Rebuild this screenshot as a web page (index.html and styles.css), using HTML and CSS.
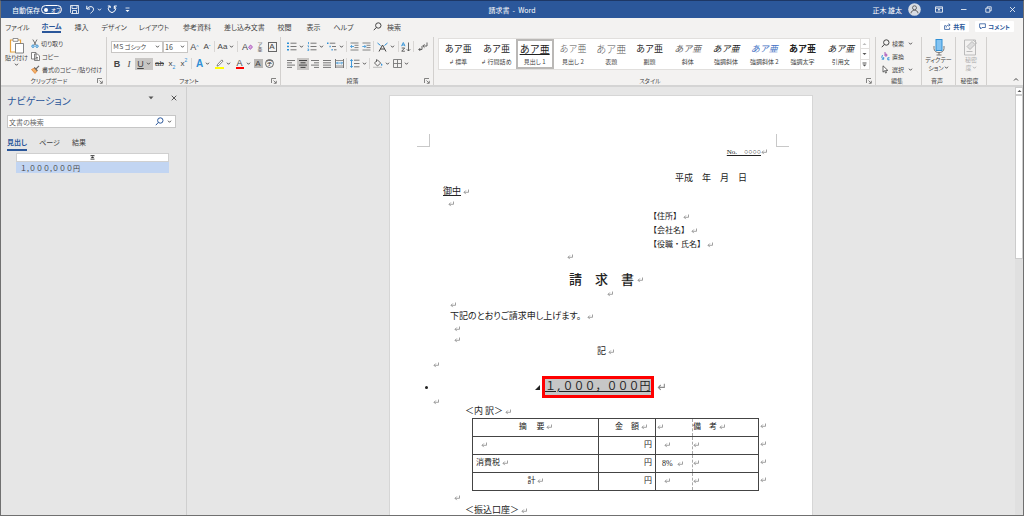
FILE: index.html
```html
<!DOCTYPE html>
<html lang="ja">
<head>
<meta charset="utf-8">
<title>請求書 - Word</title>
<link rel="stylesheet" href="styles.css">
</head>
<body>
<svg class="defs" aria-hidden="true">
  <symbol id="ret" viewBox="0 0 6 6"><path d="M5.500 .5v2.800H1M2.800 1.500L1 3.300l1.800 1.800" fill="none" stroke="#8a8a8a" stroke-width=".8"/></symbol>
  <symbol id="chev" viewBox="0 0 5 5"><path d="M1 1.700l1.500 1.600L4 1.700" fill="none" stroke="currentColor" stroke-width=".9"/></symbol>
  <symbol id="launch" viewBox="0 0 6 6"><path d="M.5 5V.5H5M2.500 2.500L5 5M5.300 2.800v2.500H2.800" fill="none" stroke="#666" stroke-width=".8"/></symbol>
  <symbol id="mag" viewBox="0 0 9 9"><circle cx="5.300" cy="3.500" r="2.700" fill="none" stroke="currentColor"/><path d="M3.400 5.400L.8 8.200" stroke="currentColor"/></symbol>
</svg>

<div class="window">
  <header class="titlebar">
    <div class="quick">
      <label for="autosave">自動保存</label>
      <span class="pill"><input type="checkbox" id="autosave"><span>オフ</span></span>
      <button class="tb save" aria-label="上書き保存"><svg width="9" height="9" viewBox="0 0 9 9" fill="none" stroke="#fff" stroke-width=".8"><path d="M.5.5h8v8h-7l-1-1zM2 .5v3h5v-3M2.500 8.500v-3h4v3"/></svg></button>
      <button class="tb undo" aria-label="元に戻す"><svg width="9" height="9" viewBox="0 0 9 9" fill="none" stroke="#fff"><path d="M.8.8v3.200H4M1 3.800C3 .8 7.500 1 7.500 4.200 7.500 6 6 7 4.500 8.300"/></svg><svg class="c"><use href="#chev"/></svg></button>
      <button class="tb redo" aria-label="やり直し"><svg width="10" height="9" viewBox="0 0 10 9" fill="none" stroke="#fff"><path d="M2.500 1.200a3.600 3.600 0 1 0 5 0M7.300 4V1h2.500M.8 1h2.400v2"/></svg></button>
      <button class="tb more" aria-label="クイック アクセスのカスタマイズ"><svg width="5" height="6" viewBox="0 0 5 6"><path d="M.5 1h4" stroke="#fff" stroke-width=".8"/><path d="M.5 3h4l-2 2z" fill="#fff"/></svg></button>
    </div>
    <h1 class="doctitle">請求書 &nbsp;-&nbsp; Word</h1>
    <div class="winctl">
      <span class="user">正木 雄太</span>
      <svg class="avatar" width="13" height="13" viewBox="0 0 13 13"><circle cx="6.500" cy="6.500" r="6.300" fill="#d8dce3"/><circle cx="6.500" cy="4.800" r="2" fill="none" stroke="#666"/><path d="M3 10.300c0-4 7-4 7 0" fill="none" stroke="#666"/></svg>
      <button class="wb" aria-label="リボンの表示オプション"><svg width="8" height="7" viewBox="0 0 8 7" fill="none" stroke="#fff" stroke-width=".8"><path d="M.5.8h7v5.400h-7zM.5 2.200h7M4 5.500V3.200M2.900 4.200L4 3.100l1.100 1.100"/></svg></button>
      <button class="wb" aria-label="最小化"><svg width="7" height="7" viewBox="0 0 7 7" stroke="#fff" stroke-width=".8"><path d="M1 3.500h5.500"/></svg></button>
      <button class="wb" aria-label="元のサイズに戻す"><svg width="7" height="7" viewBox="0 0 7 7" fill="none" stroke="#fff" stroke-width=".8"><path d="M.8 2.200h4v4h-4zM2.200 2V.8h4v4H5"/></svg></button>
      <button class="wb close" aria-label="閉じる"><svg width="7" height="7" viewBox="0 0 7 7" stroke="#fff" stroke-width=".8"><path d="M1 1l5 5M6 1L1 6"/></svg></button>
    </div>
  </header>

  <nav class="tabs">
    <button class="tab t-file">ファイル</button>
    <button class="tab t-home active"><span>ホーム</span></button>
    <button class="tab t-ins">挿入</button>
    <button class="tab t-des">デザイン</button>
    <button class="tab t-des">レイアウト</button>
    <button class="tab t-ref">参考資料</button>
    <button class="tab t-mail">差し込み文書</button>
    <button class="tab t-rev">校閲</button>
    <button class="tab t-view">表示</button>
    <button class="tab t-help">ヘルプ</button>
    <button class="tab t-search"><svg width="9" height="9"><use href="#mag"/></svg>検索</button>
    <div class="share">
      <button><svg width="7" height="7" viewBox="0 0 7 7" fill="none" stroke="#2b579a" stroke-width=".8"><path d="M2.200 2.700H.6v3.700h5V4.500M2.300 4.500c0-2 1.200-2.500 3.500-2.500M4.600.6L6.200 2 4.600 3.400"/></svg>共有</button>
      <button><svg width="7" height="7" viewBox="0 0 7 7" fill="none" stroke="#2b579a" stroke-width=".8"><path d="M.6.8h5.800v3.700H3L1.600 6V4.500h-1z"/></svg>コメント</button>
    </div>
  </nav>

  <section class="ribbon">
    <div class="group g-clip">
      <div class="content clip">
        <button class="big paste"><svg width="16" height="17" viewBox="0 0 16 17"><path d="M1.500 3h10v12h-10z" fill="#fff" stroke="#e8a33d" stroke-width="1.200"/><path d="M4 1.500h5v2.800H4z" fill="#fff" stroke="#777" stroke-width=".8"/><path d="M6.500 6.500h8v9.500h-8z" fill="#fff" stroke="#777" stroke-width=".9"/></svg><span>貼り付け</span><svg class="c"><use href="#chev"/></svg></button>
        <div class="stack">
          <button><svg width="8" height="9" viewBox="0 0 8 9" fill="none"><path d="M1.800.5L5 6M6 .5L3 6" stroke="#666" stroke-width=".9"/><circle cx="2" cy="7.200" r="1.200" stroke="#2e8fd6"/><circle cx="6" cy="7.200" r="1.200" stroke="#2e8fd6"/></svg>切り取り</button>
          <button><svg width="9" height="9" viewBox="0 0 9 9" fill="#fff" stroke="#666" stroke-width=".8"><path d="M.5.500h4.500v6.500H.5zM3.500 2h3l2 2v4.500h-5z"/><path d="M5 5.500h2M5 7h2"/></svg>コピー</button>
          <button><svg width="9" height="9" viewBox="0 0 9 9"><path d="M.5 4.500l3-1.500L6 6 4 8.500z" fill="#f2b069" stroke="#e07b28" stroke-width=".7"/><path d="M3.300 2.300l3.200 3.500M5 3.800L8 .8" stroke="#666" stroke-width="1.200"/></svg>書式のコピー/貼り付け</button>
        </div>
      </div>
      <div class="caption"><span>クリップボード</span><button aria-label="クリップボードの詳細"><svg width="6" height="6"><use href="#launch"/></svg></button></div>
    </div>

    <div class="group g-font">
      <div class="content rows">
        <div class="row">
          <span class="combo name"><select aria-label="フォント"><option>ＭＳ ゴシック</option></select><svg class="c"><use href="#chev"/></svg></span>
          <span class="combo size"><select aria-label="フォント サイズ"><option>16</option></select><svg class="c"><use href="#chev"/></svg></span>
          <button class="b13">A<sup class="blue">^</sup></button>
          <button class="b12 sm">A<sup class="blue">ˇ</sup></button>
          <i class="sep"></i>
          <button class="b20 sm">Aa<svg class="c"><use href="#chev"/></svg></button>
          <i class="sep"></i>
          <button class="b17" aria-label="書式のクリア"><span>A</span><svg width="5" height="6" viewBox="0 0 5 6"><path d="M.5 3.500l2-2.500 2 1.800-2 2.500z" fill="#d9a5e0" stroke="#a347b5" stroke-width=".8"/></svg></button>
          <button class="b8 ruby"><span>ア</span><span>亜</span></button>
          <button class="b16"><span class="boxed">A</span></button>
        </div>
        <div class="row">
          <button class="b12"><b>B</b></button>
          <button class="b12 serif"><em>I</em></button>
          <button class="b18 on"><u>U</u><svg class="c"><use href="#chev"/></svg></button>
          <button class="b13 sm"><s>ab</s></button>
          <button class="b12 sm"><span>x<sub class="blue">2</sub></span></button>
          <button class="b12 sm"><span>x<sup class="blue">2</sup></span></button>
          <i class="sep"></i>
          <button class="b20"><span class="fx">A</span><svg class="c"><use href="#chev"/></svg></button>
          <button class="b20" aria-label="蛍光ペン"><svg width="9" height="10" viewBox="0 0 9 10"><path d="M2.500 5.500L6.800.9l1.200 1.200-4.300 4.500-1.700.5z" fill="#fff" stroke="#666" stroke-width=".8"/><path d="M0 8h9v2H0z" fill="#ff0"/></svg><svg class="c"><use href="#chev"/></svg></button>
          <button class="b20"><span class="red">A</span><svg class="c"><use href="#chev"/></svg></button>
          <button class="b10"><span class="shade">A</span></button>
          <button class="b13"><span class="ring">字</span></button>
        </div>
      </div>
      <div class="caption"><span>フォント</span><button aria-label="フォントの詳細"><svg width="6" height="6"><use href="#launch"/></svg></button></div>
    </div>

    <div class="group g-para">
      <div class="content rows">
        <div class="row">
          <button class="b20" aria-label="箇条書き"><svg width="10" height="9" viewBox="0 0 10 9"><path d="M0 1.200h2M0 4.500h2M0 7.800h2" stroke="#2e8fd6" stroke-width="1.600"/><path d="M3.500 1.200h6M3.500 4.500h6M3.500 7.800h6" stroke="#777"/></svg><svg class="c"><use href="#chev"/></svg></button>
          <button class="b20" aria-label="段落番号"><svg width="10" height="9" viewBox="0 0 10 9"><path d="M1.500 0v2.200M.5 3.800h1v1.500M.5 7h1.200v1.500H.5" stroke="#2e8fd6" stroke-width=".8" fill="none"/><path d="M3.500 1.200h6M3.500 4.500h6M3.500 7.800h6" stroke="#777"/></svg><svg class="c"><use href="#chev"/></svg></button>
          <button class="b20" aria-label="アウトライン"><svg width="10" height="9" viewBox="0 0 10 9"><path d="M0 1.200h1.500M2.500 4.500h1.200M4.500 7.800h1.200" stroke="#2e8fd6" stroke-width="1.500"/><path d="M2.800 1.200h5.500M5 4.500h4M7 7.800h2.500" stroke="#777"/></svg><svg class="c"><use href="#chev"/></svg></button>
          <i class="sep"></i>
          <button class="b12" aria-label="インデントを減らす"><svg width="9" height="9" viewBox="0 0 9 9"><path d="M.5 1h8M4.500 3.300h4M4.500 5.600h4M.5 8h8" stroke="#777" stroke-width=".9"/><path d="M4 4.500H.7M2 3L.6 4.500 2 6" stroke="#2e8fd6" stroke-width=".8" fill="none"/></svg></button>
          <button class="b12" aria-label="インデントを増やす"><svg width="9" height="9" viewBox="0 0 9 9"><path d="M.5 1h8M4.500 3.300h4M4.500 5.600h4M.5 8h8" stroke="#777" stroke-width=".9"/><path d="M.3 4.500h3.500M2.400 3l1.400 1.500L2.400 6" stroke="#2e8fd6" stroke-width=".8" fill="none"/></svg></button>
          <i class="sep"></i>
          <button class="b22" aria-label="拡張書式"><svg width="11" height="10" viewBox="0 0 11 10" fill="none"><path d="M2 9.500L5.500 3 9 9.500M3.300 7h4.400" stroke="#444"/><path d="M.5 1l3 2.500M10.500 1l-3 2.500" stroke="#2e8fd6"/></svg><svg class="c"><use href="#chev"/></svg></button>
          <i class="sep"></i>
          <button class="b12" aria-label="並べ替え"><svg width="10" height="10" viewBox="0 0 10 10" fill="none"><path d="M.5 4.200L2.300.500 4 4.200M1 3h2.500" stroke="#2e8fd6" stroke-width=".9"/><path d="M.7 6h3L.7 9.200h3.200" stroke="#555" stroke-width=".9"/><path d="M7.500.500v8.500M5.800 7.300L7.500 9l1.700-1.700" stroke="#555" stroke-width=".9"/></svg></button>
          <i class="sep"></i>
          <button class="b15" aria-label="編集記号の表示"><svg width="10" height="9" viewBox="0 0 10 9" fill="none" stroke="#555" stroke-width=".9"><path d="M9 .5v3.500H5M6.500 2.300L4.800 4l1.700 1.700M4 4v3.500H.8M2.300 6L.8 7.500 2.300 9"/></svg></button>
        </div>
        <div class="row">
          <button class="b12" aria-label="左揃え"><svg width="8" height="8" viewBox="0 0 8 8" stroke="#777"><path d="M0 .5h8M0 2.800h5M0 5.100h8M0 7.400h5"/></svg></button>
          <button class="b12 on" aria-label="中央揃え"><svg width="8" height="8" viewBox="0 0 8 8" stroke="#444"><path d="M0 .5h8M1.500 2.800h5M0 5.100h8M1.500 7.400h5"/></svg></button>
          <button class="b12" aria-label="右揃え"><svg width="8" height="8" viewBox="0 0 8 8" stroke="#777"><path d="M0 .5h8M3 2.800h5M0 5.100h8M3 7.400h5"/></svg></button>
          <button class="b12" aria-label="両端揃え"><svg width="8" height="8" viewBox="0 0 8 8" stroke="#777"><path d="M0 .5h8M0 2.800h8M0 5.100h8M0 7.400h8"/></svg></button>
          <button class="b12" aria-label="均等割り付け"><svg width="9" height="9" viewBox="0 0 9 9" fill="none"><path d="M.5 0v9M8.500 0v9" stroke="#777"/><path d="M1 1.500h7M1 7h7M1 8.800h7" stroke="#777" stroke-width=".8"/><path d="M1.500 4h6M2.700 2.800L1.500 4l1.200 1.200M6.300 2.800L7.500 4 6.300 5.200" stroke="#2e8fd6" stroke-width=".8"/></svg></button>
          <i class="sep"></i>
          <button class="b20" aria-label="行間"><svg width="10" height="9" viewBox="0 0 10 9" fill="none"><path d="M1.500.5v8M.2 2L1.500.6 2.800 2M.2 7l1.300 1.400L2.800 7" stroke="#2e8fd6" stroke-width=".9"/><path d="M4 1.200h5.500M4 4.500h5.500M4 7.800h5.500" stroke="#777"/></svg><svg class="c"><use href="#chev"/></svg></button>
          <i class="sep"></i>
          <button class="b20" aria-label="塗りつぶし"><svg width="10" height="9" viewBox="0 0 10 9"><path d="M1.500 4L4.500 1l3.200 3-3.200 3zM3.500.3v2.500" fill="none" stroke="#555" stroke-width=".9"/><path d="M8.600 4.200c1.500 2 .8 2.500 0 2.500s-1-.7 0-2.500z" fill="#2e8fd6"/><path d="M0 8.300h9" stroke="#bbb"/></svg><svg class="c"><use href="#chev"/></svg></button>
          <button class="b20" aria-label="罫線"><svg width="9" height="9" viewBox="0 0 9 9" fill="none" stroke="#777" stroke-width=".9"><path d="M.5.5h8v8h-8zM4.500.5v8M.5 4.500h8"/></svg><svg class="c"><use href="#chev"/></svg></button>
        </div>
      </div>
      <div class="caption"><span>段落</span><button aria-label="段落の詳細"><svg width="6" height="6"><use href="#launch"/></svg></button></div>
    </div>

    <div class="group g-style">
      <div class="content">
        <div class="gallery">
          <button class="style"><span class="s">あア亜</span><span>↲ 標準</span></button>
          <button class="style"><span class="s">あア亜</span><span>↲ 行間詰め</span></button>
          <button class="style sel"><span class="s lg ul">あア亜</span><span>見出し 1</span></button>
          <button class="style"><span class="s lt">あア亜</span><span>見出し 2</span></button>
          <button class="style"><span class="s lg lt">あア亜</span><span>表題</span></button>
          <button class="style"><span class="s">あア亜</span><span>副題</span></button>
          <button class="style"><span class="s it gray">あア亜</span><span>斜体</span></button>
          <button class="style"><span class="s it">あア亜</span><span>強調斜体</span></button>
          <button class="style"><span class="s it bl">あア亜</span><span>強調斜体 2</span></button>
          <button class="style"><span class="s bd">あア亜</span><span>強調太字</span></button>
          <button class="style"><span class="s it">あア亜</span><span>引用文</span></button>
          <div class="gscroll">
            <button aria-label="上へ"><svg width="5" height="4" viewBox="0 0 5 4"><path d="M.5 3h4L2.500 1z" fill="#bbb"/></svg></button>
            <button aria-label="下へ"><svg width="5" height="4" viewBox="0 0 5 4"><path d="M.5 1h4l-2 2z" fill="#555"/></svg></button>
            <button aria-label="その他"><svg width="5" height="5" viewBox="0 0 5 5"><path d="M.5 1h4" stroke="#555"/><path d="M.5 2.500h4l-2 2z" fill="#555"/></svg></button>
          </div>
        </div>
      </div>
      <div class="caption"><span>スタイル</span><button aria-label="スタイルの詳細"><svg width="6" height="6"><use href="#launch"/></svg></button></div>
    </div>

    <div class="group g-edit">
      <div class="content stack">
        <button><svg width="9" height="9"><use href="#mag"/></svg>検索<svg class="c"><use href="#chev"/></svg></button>
        <button><svg width="9" height="9" viewBox="0 0 9 9" fill="none"><path d="M4 0v4M4 2.200h1.800V4H4" stroke="#a347b5" stroke-width=".9"/><path d="M8.500 5.800H6.800v2h1.700" stroke="#2e8fd6"/><path d="M1.500 3L.7 5.500l2 1.500M2.700 5v2.200H.7" stroke="#2e8fd6" stroke-width=".9"/></svg>置換</button>
        <button><svg width="9" height="9" viewBox="0 0 9 9"><path d="M2 .8v6.400l1.600-1.500 1 2.400 1-.5-1-2.200h2.200z" fill="#fff" stroke="#444" stroke-width=".8"/></svg>選択<svg class="c"><use href="#chev"/></svg></button>
      </div>
      <div class="caption"><span>編集</span></div>
    </div>

    <div class="group g-voice">
      <div class="content">
        <button class="big"><svg width="12" height="17" viewBox="0 0 12 17" fill="none"><path d="M1 7v2.500c0 5.500 10 5.500 10 0V7M6 13.500V16M3.500 16h5" stroke="#777"/><rect x="3" y=".5" width="6" height="11" fill="#83c3f1" stroke="#2e8fd6"/></svg><span>ディクテー<br>ション<svg class="c"><use href="#chev"/></svg></span></button>
      </div>
      <div class="caption"><span>音声</span></div>
    </div>

    <div class="group g-sens">
      <div class="content">
        <button class="big off" disabled><svg width="14" height="17" viewBox="0 0 14 17" fill="none" stroke="#bbb"><path d="M.5 1h11v15H.5zM2.500 12.500h6"/><path d="M3 7.500l5-5 3 3-5 5zM9 1l4 3.500" fill="#ddd"/></svg><span>秘密<br>度<svg class="c"><use href="#chev"/></svg></span></button>
      </div>
      <div class="caption"><span>秘密度</span></div>
    </div>

    <div class="fold"><button aria-label="リボンを折りたたむ"><svg width="6" height="5" viewBox="0 0 6 5"><path d="M1 3.500L3 1.500l2 2" fill="none" stroke="#444"/></svg></button></div>
  </section>

  <main class="workspace">
    <aside class="navpane">
      <div class="navhead">
        <h2>ナビゲーション</h2>
        <button aria-label="ウィンドウのオプション"><svg width="6" height="4" viewBox="0 0 6 4"><path d="M.5.5h5L3 3.300z" fill="#555"/></svg></button>
        <button aria-label="閉じる"><svg width="6" height="6" viewBox="0 0 6 6"><path d="M.7.7l4.600 4.600M5.300.7L.7 5.300" stroke="#555"/></svg></button>
      </div>
      <div class="find">
        <input type="text" aria-label="文書の検索" placeholder="文書の検索">
        <button aria-label="検索"><svg width="9" height="9"><use href="#mag"/></svg></button>
        <button class="dark" aria-label="検索オプション"><svg class="c"><use href="#chev"/></svg></button>
      </div>
      <div class="navtabs">
        <button class="active">見出し</button><button>ページ</button><button>結果</button>
      </div>
      <div class="headings">
        <button class="top" aria-label="先頭へ"><svg width="5" height="5" viewBox="0 0 5 5"><path d="M.5.700h4" stroke="#333"/><path d="M2.500 1.300L.500 3.300h4z" fill="#333"/><path d="M.5 4.300h4" stroke="#333" stroke-width=".7"/></svg></button>
        <button class="entry">１,０００,０００円</button>
      </div>
    </aside>

    <div class="canvas">
      <article class="page">
        <div class="crop"><i class="cl"></i><i class="cr"></i></div>
        <p class="l10 docno"><u>No.　○○○○</u><svg class="r"><use href="#ret"/></svg></p>
        <p class="l10 date">平成　年　月　日</p>
        <p class="l12 to"><u>御中</u> <svg class="r"><use href="#ret"/></svg></p>
        <p class="l12 in1"><svg class="r"><use href="#ret"/></svg></p>
        <p class="l14 from">【住所】 <svg class="r"><use href="#ret"/></svg></p>
        <p class="l14 from">【会社名】 <svg class="r"><use href="#ret"/></svg></p>
        <p class="l14 from">【役職・氏名】 <svg class="r"><use href="#ret"/></svg></p>
        <p class="l10 mid"><svg class="r"><use href="#ret"/></svg></p>
        <h3 class="invoice">請　求　書 <svg class="r"><use href="#ret"/></svg></h3>
        <p class="l12 center"><svg class="r"><use href="#ret"/></svg></p>
        <p class="l10 in2"><svg class="r"><use href="#ret"/></svg></p>
        <p class="l14 lead">下記のとおりご請求申し上げます。   <svg class="r"><use href="#ret"/></svg></p>
        <p class="l10 in3"><svg class="r"><use href="#ret"/></svg></p>
        <p class="l12 in3"><svg class="r"><use href="#ret"/></svg></p>
        <p class="l12 ki">記 <svg class="r"><use href="#ret"/></svg></p>
        <p class="l14 in0"><svg class="r"><use href="#ret"/></svg></p>
        <div class="amount">
          <i class="dot"></i>
          <svg class="tri" width="5" height="5" viewBox="0 0 5 5"><path d="M5 0v5H0z" fill="#222"/></svg>
          <h4>１,０００，０００円</h4>
          <svg class="r big-r"><use href="#ret"/></svg>
        </div>
        <p class="l6 in0"><svg class="r"><use href="#ret"/></svg></p>
        <p class="l14 sec">＜内 訳＞ <svg class="r"><use href="#ret"/></svg></p>
        <table class="items">
          <colgroup><col class="c1"><col class="c2"><col class="c3"><col class="c4"><col class="c5"></colgroup>
          <tr><th>摘　 要 <svg class="r"><use href="#ret"/></svg></th><th>　金　額 <svg class="r"><use href="#ret"/></svg></th><td class="tax flush"><svg class="r"><use href="#ret"/></svg></td><td class="dash">備　考 <svg class="r"><use href="#ret"/></svg></td><td class="out"><svg class="r"><use href="#ret"/></svg></td></tr>
          <tr><td class="pad"><svg class="r"><use href="#ret"/></svg></td><td class="num">円</td><td class="tax pad"><svg class="r"><use href="#ret"/></svg></td><td class="dash"><svg class="r"><use href="#ret"/></svg></td><td class="out"><svg class="r"><use href="#ret"/></svg></td></tr>
          <tr><td>消費税 <svg class="r"><use href="#ret"/></svg></td><td class="num">円</td><td class="tax rate">8%  <svg class="r"><use href="#ret"/></svg></td><td class="dash"><svg class="r"><use href="#ret"/></svg></td><td class="out"><svg class="r"><use href="#ret"/></svg></td></tr>
          <tr><th>計 <svg class="r"><use href="#ret"/></svg></th><td class="num">円</td><td class="tax pad"><svg class="r"><use href="#ret"/></svg></td><td class="dash"><svg class="r"><use href="#ret"/></svg></td><td class="out"><svg class="r"><use href="#ret"/></svg></td></tr>
        </table>
        <p class="l12 in3"><svg class="r"><use href="#ret"/></svg></p>
        <p class="l14 sec">＜振込口座＞ <svg class="r"><use href="#ret"/></svg></p>
      </article>
    </div>
    <div class="vscroll">
      <button aria-label="上へスクロール"><svg width="5" height="4" viewBox="0 0 5 4"><path d="M.5 3h4L2.500 1z" fill="#555"/></svg></button>
      <div class="thumb"></div>
    </div>
  </main>
</div>
</body>
</html>
```

FILE: styles.css
```css
* { box-sizing: border-box; }

body {
  margin: 0;
  height: 100vh;
  overflow: hidden;
  font-family: "Noto Sans CJK JP", sans-serif;
  font-size: 7px;
  line-height: 10px;
  color: #444;
}

button, select, input {
  font: inherit;
  color: inherit;
  border: 0;
  padding: 0;
  margin: 0;
  background: none;
}

h1, h2, h3, h4, p { margin: 0; font-weight: 400; }
svg { flex: none; }
.defs { position: absolute; width: 0; height: 0; }
.c { width: 5px; height: 5px; }
.r { width: 6px; height: 6px; vertical-align: middle; }

.window {
  display: flex;
  flex-direction: column;
  height: 100%;
  border: 1px solid #707070;
  border-top-color: #1d3765;
}

/* Title bar */
.titlebar {
  display: grid;
  grid-template-columns: 1fr auto 1fr;
  align-items: center;
  height: 17px;
  flex: none;
  background: #2b579a;
  color: #fff;
}
.quick, .winctl { display: flex; align-items: center; }
.quick { padding-left: 11px; }
.pill {
  display: flex;
  align-items: center;
  gap: 3px;
  width: 21px;
  height: 9px;
  margin-left: 1px;
  padding-left: 2px;
  border: 1px solid #fff;
  border-radius: 5px;
  font-size: 5px;
}
.pill input { appearance: none; width: 4px; height: 4px; border-radius: 50%; background: #fff; }
.tb { display: flex; align-items: center; gap: 2px; }
.save { margin-left: 8px; }
.undo { margin-left: 7px; }
.redo { margin-left: 5px; }
.more { margin-left: 8px; }
.doctitle { font-size: 7px; }
.winctl { justify-content: flex-end; }
.avatar { margin: 0 5px 0 6px; }
.wb { display: flex; align-items: center; justify-content: center; width: 25px; height: 17px; }
.wb.close { width: 22px; }

/* Tabs */
.tabs {
  display: flex;
  height: 19px;
  flex: none;
  background: #f3f2f1;
  font-feature-settings: "palt";
}
.tab { height: 17px; white-space: nowrap; text-align: center; }
.t-file { width: 33px; }
.t-home { width: 35px; }
.t-ins { width: 25px; }
.t-des { width: 40px; }
.t-ref { width: 46px; }
.t-mail { width: 49px; }
.t-rev { width: 31px; }
.t-view { width: 27px; }
.t-help { width: 33px; }
.t-search { display: flex; align-items: center; gap: 5px; margin-left: 13px; }
.tab.active { font-weight: 700; color: #2b579a; }
.tab.active span { display: inline-block; border-bottom: 2px solid #2b579a; }
.share { display: flex; gap: 6px; margin-left: auto; padding: 3px 9px 0 0; }
.share button {
  display: flex;
  align-items: center;
  gap: 2px;
  height: 11px;
  padding: 0 4px;
  background: #fff;
  border-radius: 1px;
  color: #2b579a;
  font-size: 6px;
  font-weight: 700;
}

/* Ribbon */
.ribbon {
  display: flex;
  height: 50px;
  flex: none;
  background: #f3f2f1;
  border-bottom: 2px solid #d4d4d4;
  font-size: 6px;
  font-feature-settings: "palt";
}
.group {
  display: flex;
  flex-direction: column;
  flex: none;
  height: 48px;
  border-right: 1px solid #d2d0ce;
}
.content { flex: 1; min-height: 0; }
.caption { display: flex; align-items: center; height: 8px; padding-right: 3px; }
.caption span { flex: 1; text-align: center; line-height: 8px; }
.caption button { display: flex; }
.g-clip { width: 106px; }
.g-font { width: 174px; }
.g-para { width: 153px; }
.g-style { flex: 1 1 0; min-width: 0; }
.g-edit { width: 46px; }
.g-voice { width: 34px; }
.g-sens { width: 31px; }

.clip { display: flex; padding-left: 3px; gap: 2px; }
.stack { display: flex; flex-direction: column; }
.stack button { display: flex; align-items: center; gap: 2px; height: 13px; white-space: nowrap; }
.g-edit .stack { padding-left: 5px; }
.g-edit .stack .c { margin-left: 2px; }
.big { display: flex; flex-direction: column; align-items: center; line-height: 8px; }
.paste { width: 25px; white-space: nowrap; }
.g-voice .big, .g-sens .big { width: 100%; padding-top: 2px; }
.off { color: #b0b0b0; }

.rows { display: flex; flex-direction: column; gap: 4px; padding: 3px 0 0 4px; }
.row { display: flex; align-items: center; height: 13px; }
.row button {
  display: flex;
  align-items: center;
  justify-content: center;
  height: 12px;
  font-family: "Liberation Sans", "Noto Sans CJK JP", sans-serif;
  font-size: 9px;
}
.row button .c { margin-left: 2px; }
.row .sm { font-size: 8px; }
.row .serif { font-family: "Liberation Serif", serif; }
.row .on { background: #c8c6c4; }
.row sup, .row sub { font-size: 5px; line-height: 0; }
.blue { color: #2e8fd6; }
.b8 { width: 8px; }
.b10 { width: 10px; }
.b12 { width: 12px; }
.b13 { width: 13px; }
.b15 { width: 15px; }
.b16 { width: 16px; }
.b17 { width: 17px; }
.b18 { width: 18px; }
.b20 { width: 20px; }
.b22 { width: 22px; }
.sep { width: 1px; height: 11px; margin: 0 1px; background: #d8d6d4; }

.combo {
  display: flex;
  align-items: center;
  height: 12px;
  padding: 0 2px 0 1px;
  background: #fff;
  border: 1px solid #c8c6c4;
}
.combo select { appearance: none; flex: 1; min-width: 0; }
.name { width: 52px; }
.size { width: 25px; font-size: 7px; }
.row .ruby { flex-direction: column; font-size: 5px; line-height: 5px; }
.boxed { border: 1px solid #666; width: 9px; line-height: 8px; font-size: 8px; }
.fx { color: #2e8fd6; font-weight: 700; font-size: 10px; }
.red { border-bottom: 2px solid #f00; width: 8px; line-height: 8px; }
.shade { background: #b8b6b4; width: 9px; line-height: 9px; font-size: 8px; }
.ring { width: 9px; height: 9px; border: 1px solid #666; border-radius: 50%; font-size: 6px; line-height: 7px; }

.gallery {
  display: flex;
  height: 32px;
  margin: 1px 5px 0 4px;
  background: #fff;
  border: 1px solid #e1dfdd;
}
.style {
  display: flex;
  flex-direction: column;
  align-items: center;
  justify-content: center;
  flex: 1 1 0;
  min-width: 0;
  line-height: 9px;
  white-space: nowrap;
  overflow: hidden;
}
.style .s { font-size: 9px; line-height: 12px; height: 14px; color: #222; font-feature-settings: normal; }
.style .lg { font-size: 10px; }
.style .ul { text-decoration: underline; }
.style .it { font-style: italic; }
.style .gray { color: #666; }
.style .lt { color: #555; font-weight: 300; }
.style .bl { color: #4472c4; }
.style .bd { font-weight: 700; }
.style.sel { outline: 2px solid #bab8b6; outline-offset: -2px; }
.gscroll { display: flex; flex-direction: column; width: 9px; border-left: 1px solid #e1dfdd; }
.gscroll button { display: flex; flex: 1; align-items: center; justify-content: center; }
.gscroll button + button { border-top: 1px solid #e1dfdd; }
.fold { display: flex; flex: none; width: 36px; align-items: flex-end; justify-content: flex-end; padding: 0 4px 0 0; }

/* Navigation pane */
.workspace { display: flex; flex: 1; min-height: 0; background: #e6e6e6; }
.navpane { width: 186px; flex: none; padding: 6px 10px 0 6px; border-right: 1px solid #cfcfcf; font-feature-settings: "palt"; }
.navhead { display: flex; align-items: flex-start; gap: 17px; }
.navhead h2 { flex: 1; font-size: 10px; line-height: 16px; color: #2b579a; }
.navhead button { display: flex; align-items: center; height: 10px; }
.navhead button:last-child { margin-right: -1px; }
.find { display: flex; align-items: center; height: 13px; margin-top: 6px; background: #fff; border: 1px solid #c6c6c6; color: #2b579a; }
.find input { flex: 1; min-width: 0; padding-left: 1px; color: #444; }
.find input::placeholder { color: #666; opacity: 1; }
.find button { display: flex; margin-right: 3px; }
.find .dark { color: #444; }
.navtabs { display: flex; gap: 12px; margin-top: 6px; }
.navtabs button { height: 17px; border-bottom: 2px solid transparent; }
.navtabs .active { color: #2b579a; font-weight: 700; border-color: #2b579a; }
.headings { margin: 2px 7px 0 9px; font-feature-settings: normal; }
.headings button { display: flex; align-items: center; width: 100%; }
.headings .top { justify-content: center; height: 9px; background: #fff; border: 1px solid #d0d0d0; }
.headings .entry { height: 11px; padding-left: 4px; background: #c2d5f2; }

/* Document */
.canvas { flex: 1; min-width: 0; display: flex; justify-content: center; padding-top: 8px; overflow: hidden; }
.page {
  flex: none;
  width: 424px;
  background: #fff;
  border: 1px solid #d6d6d6;
  border-bottom: 0;
  font-size: 8px;
  color: #222;
}
.page p { white-space: pre; }
.page .l6 { line-height: 6px; height: 6px; }
.page .l10 { line-height: 10px; height: 10px; }
.page .l12 { line-height: 12px; height: 12px; }
.page .l14 { line-height: 14px; height: 14px; }
.crop { display: flex; justify-content: space-between; padding: 38px 23px 0 27px; }
.crop i { width: 13px; height: 13px; border-bottom: 1px solid #c8c8c8; }
.crop .cl { border-right: 1px solid #c8c8c8; }
.crop .cr { border-left: 1px solid #c8c8c8; }
.docno { text-align: right; padding-right: 45px; font-family: "Liberation Serif", "Noto Sans CJK JP", serif; font-size: 7px; }
.page .date { text-align: right; padding-right: 65px; margin: 16px 0 2px; font-size: 9px; }
.to { padding-left: 53px; font-size: 9px; }
.in0 { padding-left: 43px; }
.in1 { padding-left: 58px; }
.in2 { padding-left: 60px; }
.in3 { padding-left: 64px; }
.from { padding-left: 259px; }
.mid { padding-left: 177px; }
.center { text-align: center; padding-left: 18px; }
.invoice { margin-top: 10px; padding-left: 179px; font-size: 13px; font-weight: 500; line-height: 16px; white-space: pre; }
.lead { padding-left: 60px; font-size: 9px; font-feature-settings: "palt"; }
.ki { padding-left: 207px; font-size: 9px; }
.amount { display: flex; align-items: center; margin-top: 5px; padding-left: 35px; }
.dot { width: 3px; height: 3px; border-radius: 50%; background: #222; }
.tri { margin: 0 2px 0 107px; }
.amount h4 {
  height: 22px;
  border: 3px solid #f00;
  background: #c6c6c6;
  font-family: "Liberation Mono", "Noto Sans CJK JP", monospace;
  font-size: 11px;
  line-height: 16px;
  text-decoration: underline;
  white-space: nowrap;
}
.big-r { width: 8px; height: 8px; margin-left: 3px; }
.sec { padding-left: 75px; font-size: 9px; }
.items { margin-left: 82px; table-layout: fixed; width: 294px; border-collapse: collapse; }
.items th, .items td {
  height: 18px;
  padding: 1px 3px;
  border: 1px solid #444;
  font-weight: 400;
  line-height: 12px;
  vertical-align: top;
  white-space: pre;
}
.items td { text-align: left; }
.items .num { text-align: right; }
.items .tax { border-right: 1px dashed #aaa; }
.items .pad { padding-left: 8px; }
.items .rate { padding: 3px 0 0 6px; font-family: "Liberation Serif", serif; }
.items .flush { padding-left: 1px; }
.items .dash { border-left: 1px dashed #aaa; padding-left: 0; }
.items .out { border: 0; border-left: 1px solid #444; padding: 1px 0 0 1px; }
.c1 { width: 126px; }
.c2 { width: 57px; }
.c3 { width: 37px; }
.c4 { width: 66px; }
.c5 { width: 8px; }

.vscroll { width: 8px; flex: none; display: flex; flex-direction: column; background: #e0e0e0; }
.vscroll button { display: flex; align-items: center; justify-content: center; height: 8px; background: #fff; border: 1px solid #ccc; }
.thumb { height: 164px; background: #fff; border: 1px solid #ccc; }
```
